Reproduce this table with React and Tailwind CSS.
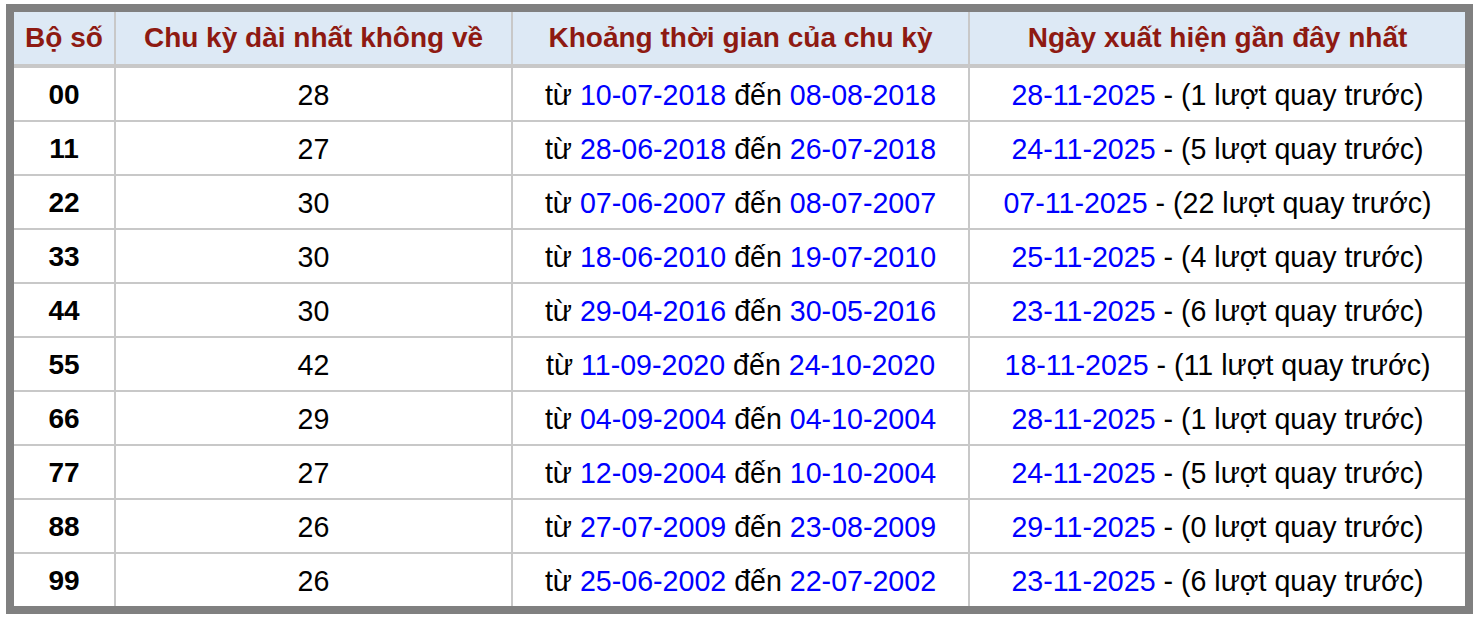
const rows = [
  ['00', '28', '10-07-2018', '08-08-2018', '28-11-2025', 1],
  ['11', '27', '28-06-2018', '26-07-2018', '24-11-2025', 5],
  ['22', '30', '07-06-2007', '08-07-2007', '07-11-2025', 22],
  ['33', '30', '18-06-2010', '19-07-2010', '25-11-2025', 4],
  ['44', '30', '29-04-2016', '30-05-2016', '23-11-2025', 6],
  ['55', '42', '11-09-2020', '24-10-2020', '18-11-2025', 11],
  ['66', '29', '04-09-2004', '04-10-2004', '28-11-2025', 1],
  ['77', '27', '12-09-2004', '10-10-2004', '24-11-2025', 5],
  ['88', '26', '27-07-2009', '23-08-2009', '29-11-2025', 0],
  ['99', '26', '25-06-2002', '22-07-2002', '23-11-2025', 6],
];

const headers = ['Bộ số', 'Chu kỳ dài nhất không về', 'Khoảng thời gian của chu kỳ', 'Ngày xuất hiện gần đây nhất'];

export default function App() {
  return (
    <div className="w-[1478px] h-[620px] bg-white pt-[4px] pl-[6px] font-['Liberation_Sans',Arial,sans-serif]">
      <div className="w-[1467px] border-8 border-[#808080] bg-[#c8c8c8]">
        <div className="grid grid-cols-[100px_395px_455px_1fr] gap-[2px] leading-none">
          {headers.map((h) => (
            <div key={h} className="h-[52px] mb-[2px] bg-[#dde9f5] flex items-center justify-center text-[28px] font-bold text-[#8e1a12]">
              {h}
            </div>
          ))}
          {rows.map(([num, len, from, to, last, ago]) => (
            <div key={num} className="contents">
              <div className="h-[52px] pt-[2px] bg-white flex items-center justify-center text-[28px] font-bold text-black">{num}</div>
              <div className="h-[52px] pt-[2px] bg-white flex items-center justify-center text-[28.6px] text-black">{len}</div>
              <div className="h-[52px] pt-[2px] bg-white flex items-center justify-center text-[28.6px] text-black whitespace-pre">
                từ <span className="text-[#0000ff]">{from}</span> đến <span className="text-[#0000ff]">{to}</span>
              </div>
              <div className="h-[52px] pt-[2px] bg-white flex items-center justify-center text-[28.6px] text-black whitespace-pre">
                <span className="text-[#0000ff]">{last}</span> - ({ago} lượt quay trước)
              </div>
            </div>
          ))}
        </div>
      </div>
    </div>
  );
}
